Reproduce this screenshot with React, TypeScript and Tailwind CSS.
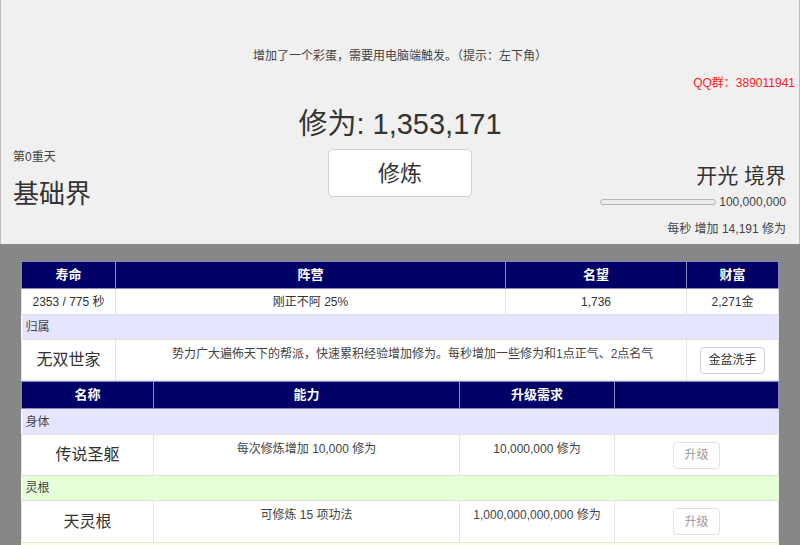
import React from 'react';

const font = { fontFamily: '"Liberation Sans", "Noto Sans CJK SC", sans-serif' };

const Th: React.FC<{ children?: React.ReactNode; w: string }> = ({ children, w }) => (
  <th className={`${w} h-[27px] border border-[#8a8ab8] bg-[#000066] text-[13px] font-bold text-white text-center p-0`}>
    {children}
  </th>
);

const App: React.FC = () => {
  return (
    <div className="w-[800px] h-[545px] overflow-hidden bg-[#878787] text-[#333]" style={font}>
      {/* Top panel */}
      <div className="h-[244px] bg-[#f0f0f0] border-x border-[#bdbdbd]">
        <div className="pt-[48px] text-center text-[12px] leading-[16px] text-[#444]">
          增加了一个彩蛋，需要用电脑端触发。（提示：左下角）
        </div>
        <div className="mt-[11px] pr-[4px] text-right text-[12px] leading-[16px] text-[#ff1a1a]">
          QQ群：389011941
        </div>
        <div className="mt-[9px] flex items-start">
          <div className="w-[280px] pl-[12px] pt-[49px]">
            <div className="text-[12px] leading-[16px] text-[#444]">第0重天</div>
            <div className="mt-[13px] text-[26px] leading-[32px] text-[#333]">基础界</div>
          </div>
          <div className="flex-1 flex flex-col items-center pt-[6px]">
            <div className="text-[29px] leading-[36px] text-[#333]">修为: 1,353,171</div>
            <button className="mt-[7px] w-[144px] h-[48px] bg-white border border-[#d0d0d0] rounded-[5px] text-[22px] text-[#333]">
              修炼
            </button>
          </div>
          <div className="w-[280px] pr-[13px] pt-[63px] flex flex-col items-end">
            <div className="text-[21px] leading-[26px] text-[#333]">开光 境界</div>
            <div className="mt-[6px] flex items-center gap-[3px]">
              <div className="w-[116px] h-[6px] rounded-full border border-[#b5b5b5] bg-[#ececec]" />
              <span className="text-[12px] leading-[14px] text-[#444]">100,000,000</span>
            </div>
            <div className="mt-[12px] text-[12px] leading-[16px] text-[#444]">每秒 增加 14,191 修为</div>
          </div>
        </div>
      </div>

      {/* Tables */}
      <div className="pt-[17px] pl-[21px]">
        <table className="w-[757px] border-collapse bg-white text-[12px] text-[#333] table-fixed">
          <thead>
            <tr>
              <Th w="w-[94px]">寿命</Th>
              <Th w="w-[390px]">阵营</Th>
              <Th w="w-[181px]">名望</Th>
              <Th w="w-[92px]">财富</Th>
            </tr>
          </thead>
          <tbody>
            <tr className="h-[26px]">
              <td className="border border-[#e2e2e2] text-center">2353 / 775 秒</td>
              <td className="border border-[#e2e2e2] text-center">刚正不阿 25%</td>
              <td className="border border-[#e2e2e2] text-center">1,736</td>
              <td className="border border-[#e2e2e2] text-center">2,271金</td>
            </tr>
            <tr className="h-[25px] bg-[#e5e5ff]">
              <td colSpan={4} className="pl-[4px] text-[#444]">归属</td>
            </tr>
            <tr className="h-[41px]">
              <td className="border border-[#e2e2e2] text-center text-[16px] text-[#333]">无双世家</td>
              <td colSpan={2} className="border border-[#e2e2e2] align-top pt-[5px] pl-[56px] text-[#444]">
                势力广大遍佈天下的帮派，快速累积经验增加修为。每秒增加一些修为和1点正气、2点名气
              </td>
              <td className="border border-[#e2e2e2] text-center">
                <button className="h-[27px] px-[7px] border border-[#cfcfcf] rounded-[4px] bg-white text-[12px] text-[#333]">
                  金盆洗手
                </button>
              </td>
            </tr>
          </tbody>
        </table>

        <table className="w-[757px] border-collapse bg-white text-[12px] text-[#333] table-fixed">
          <thead>
            <tr>
              <Th w="w-[132px]">名称</Th>
              <Th w="w-[306px]">能力</Th>
              <Th w="w-[155px]">升级需求</Th>
              <Th w="w-[164px]" />
            </tr>
          </thead>
          <tbody>
            <tr className="h-[26px] bg-[#e5e5ff]">
              <td colSpan={4} className="pl-[4px] text-[#444]">身体</td>
            </tr>
            <tr className="h-[41px]">
              <td className="border border-[#e2e2e2] text-center text-[16px]">传说圣躯</td>
              <td className="border border-[#e2e2e2] text-center align-top pt-[5px] text-[#444]">每次修炼增加 10,000 修为</td>
              <td className="border border-[#e2e2e2] text-center align-top pt-[5px] text-[#444]">10,000,000 修为</td>
              <td className="border border-[#e2e2e2] text-center">
                <button className="h-[27px] px-[10px] border border-[#e2e2e2] rounded-[4px] bg-white text-[12px] text-[#9a9a9a]">
                  升级
                </button>
              </td>
            </tr>
            <tr className="h-[25px] bg-[#e5ffd6]">
              <td colSpan={4} className="pl-[4px] text-[#444]">灵根</td>
            </tr>
            <tr className="h-[42px]">
              <td className="border border-[#e2e2e2] text-center text-[16px]">天灵根</td>
              <td className="border border-[#e2e2e2] text-center align-top pt-[5px] text-[#444]">可修炼 15 项功法</td>
              <td className="border border-[#e2e2e2] text-center align-top pt-[5px] text-[#444]">1,000,000,000,000 修为</td>
              <td className="border border-[#e2e2e2] text-center">
                <button className="h-[27px] px-[10px] border border-[#e2e2e2] rounded-[4px] bg-white text-[12px] text-[#9a9a9a]">
                  升级
                </button>
              </td>
            </tr>
            <tr className="h-[25px] bg-[#ffffdd]">
              <td colSpan={4} />
            </tr>
          </tbody>
        </table>
      </div>
    </div>
  );
};

export default App;
